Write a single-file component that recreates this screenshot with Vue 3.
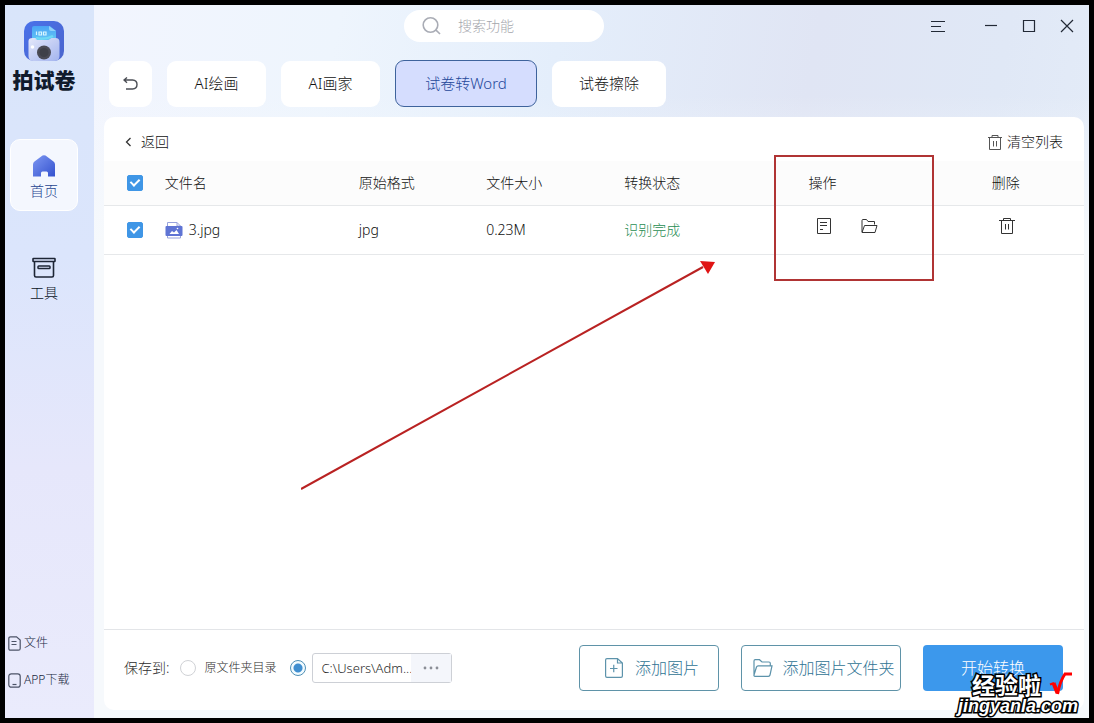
<script setup>
import { ref } from 'vue'

const tabs = ['AI绘画', 'AI画家', '试卷转Word', '试卷擦除']
const active = ref('试卷转Word')
const allChecked = ref(true)
const files = ref([{ name: '3.jpg', format: 'jpg', size: '0.23M', status: '识别完成', checked: true }])
const target = ref('custom')
const keyword = ref('')
const path = ref('C:\\Users\\Adm...')
</script>

<template>
  <div class="screen">
    <div class="window">
      <aside class="sidebar">
        <div class="brand">
          <svg class="logo" viewBox="0 0 40 40" aria-hidden="true">
            <defs>
              <linearGradient id="lg-bg" x1="0" y1="0" x2="1" y2="1">
                <stop offset="0" stop-color="#4a72ea" />
                <stop offset="1" stop-color="#4a64cc" />
              </linearGradient>
              <linearGradient id="lg-card" x1="0" y1="0" x2="0" y2="1">
                <stop offset="0" stop-color="#4aa3f5" />
                <stop offset="1" stop-color="#68cdf5" />
              </linearGradient>
              <linearGradient id="lg-body" x1="0" y1="0" x2="1" y2="1">
                <stop offset="0" stop-color="#e4e8fa" />
                <stop offset="1" stop-color="#a3b4ee" />
              </linearGradient>
            </defs>
            <rect width="40" height="40" rx="10" fill="url(#lg-bg)" />
            <path d="M10 5h16l6 5v12H8V7q0-2 2-2z" fill="url(#lg-card)" />
            <path d="M25 5l7 5h-5q-2 0-2-2z" fill="#8fd0fa" />
            <path d="M12.500 10.500v3.500M15 11h2.500v3H15zM19.500 11H22v3h-2.500z" stroke="#d9f6ff" stroke-width="1.200" fill="none" />
            <path d="M4.500 20q0-3 4-3h3l2 2h11l3-2h4q4 0 4 4v14q0 5-5 5H9.500q-5 0-5-5z" fill="url(#lg-body)" />
            <path d="M12 17q9 2 17-2" stroke="#6fd9f5" stroke-width="2.500" fill="none" />
            <circle cx="8.500" cy="26" r="1.800" fill="#fff" />
            <circle cx="20" cy="31.500" r="7" fill="#4b4b55" />
            <circle cx="20" cy="31.500" r="4.500" fill="#3f4048" />
          </svg>
          <strong class="brand-name">拍试卷</strong>
        </div>
        <nav class="menu">
          <a href="#home" class="menu-item current">
            <svg width="24" height="22" viewBox="0 0 24 22" aria-hidden="true">
              <defs>
                <linearGradient id="lg-home" x1="0" y1="0" x2="1" y2="1">
                  <stop offset="0" stop-color="#7d97f2" />
                  <stop offset="1" stop-color="#3452cf" />
                </linearGradient>
              </defs>
              <path d="M10.500.6q1.500-.9 3 0l8 6q1.500 1 1.500 3V21.500h-7V18q0-1.500-1.500-1.500h-4Q9 16.500 9 18v3.500H1V9.600q0-2 1.500-3z" fill="url(#lg-home)" />
            </svg>
            <span>首页</span>
          </a>
          <a href="#tools" class="menu-item">
            <svg width="24" height="22" viewBox="0 0 24 22" fill="none" stroke="#1d2535" stroke-width="1.600" aria-hidden="true">
              <rect x="1" y="1.500" width="22" height="3" rx=".5" />
              <path d="M2.500 5v13.500q0 1.500 1.500 1.500h16q1.500 0 1.500-1.500V5" />
              <rect x="6" y="9" width="12" height="2.600" rx=".8" stroke-width="1.500" />
            </svg>
            <span>工具</span>
          </a>
        </nav>
        <div class="extras">
          <a href="#files">
            <svg width="13" height="15" viewBox="0 0 13 15" fill="none" stroke="#4c5367" stroke-width="1.200" aria-hidden="true">
              <path d="M2.600.8H8.500L12.200 4v8.400q0 1.800-1.800 1.800H2.600Q.8 14.200.8 12.400V2.600Q.8.800 2.600.8zM3.500 5.500h5M3.500 8.500h5" />
            </svg>
            文件
          </a>
          <a href="#app">
            <svg width="13" height="15" viewBox="0 0 13 15" fill="none" stroke="#4c5367" stroke-width="1.200" aria-hidden="true">
              <rect x=".8" y=".8" width="11.400" height="13.400" rx="2.500" />
              <path d="M4.500 11.500h4" />
            </svg>
            APP下载
          </a>
        </div>
      </aside>

      <main class="main">
        <header class="titlebar">
          <label class="search">
            <svg width="20" height="20" viewBox="0 0 20 20" fill="none" stroke="#a9acb5" stroke-width="1.600" aria-hidden="true">
              <circle cx="8.500" cy="9" r="7.300" />
              <path d="M14 14.200L18 18" />
            </svg>
            <input v-model="keyword" type="text" placeholder="搜索功能" aria-label="搜索功能" />
          </label>
          <div class="controls">
            <button class="menu-button" aria-label="菜单">
              <svg width="14" height="14" viewBox="0 0 14 14"><path d="M0 2.500h14M0 7.500h10M0 12.500h14" /></svg>
            </button>
            <button aria-label="最小化">
              <svg width="14" height="14" viewBox="0 0 14 14"><path d="M1 6.500h12" /></svg>
            </button>
            <button aria-label="最大化">
              <svg width="14" height="14" viewBox="0 0 14 14"><path d="M1.500 1.500h11v11h-11z" /></svg>
            </button>
            <button aria-label="关闭">
              <svg width="14" height="14" viewBox="0 0 14 14"><path d="M1 1l12 12M13 1L1 13" /></svg>
            </button>
          </div>
        </header>

        <div class="tabs">
          <button class="tab undo" aria-label="后退">
            <svg width="15" height="13" viewBox="0 0 15 13" fill="none" stroke="#4b4e55" stroke-width="1.400" aria-hidden="true">
              <path d="M4 .5L1 3l3 2.700M1 3h8.500q4.500.3 4.500 4.500T9.500 12H3" />
            </svg>
          </button>
          <button v-for="t in tabs" :key="t" class="tab" :class="{ active: t === active }" @click="active = t">{{ t }}</button>
        </div>

        <section class="panel">
          <div class="toolbar">
            <button class="plain">
              <svg width="7" height="10" viewBox="0 0 7 10" fill="none" stroke="#333" stroke-width="1.300" aria-hidden="true"><path d="M5.500 1L1.500 5l4 4" /></svg>
              返回
            </button>
            <button class="plain clear">
              <svg width="16" height="17" viewBox="0 0 16 17" fill="none" stroke="#555" aria-hidden="true">
                <path d="M1 3.500h14M5 3.500v-2h6v2M2.500 3.500v12h11v-12M6.500 7v5.500M9.500 7v5.500" />
              </svg>
              清空列表
            </button>
          </div>

          <table class="files">
            <colgroup>
              <col class="c-check" /><col class="c-name" /><col class="c-format" /><col class="c-size" />
              <col class="c-status" /><col class="c-action" /><col class="c-delete" />
            </colgroup>
            <thead>
              <tr>
                <th><input v-model="allChecked" type="checkbox" aria-label="全选" /></th>
                <th>文件名</th>
                <th>原始格式</th>
                <th>文件大小</th>
                <th>转换状态</th>
                <th>操作</th>
                <th>删除</th>
              </tr>
            </thead>
            <tbody>
              <tr v-for="f in files" :key="f.name">
                <td><input v-model="f.checked" type="checkbox" :aria-label="f.name" /></td>
                <td>
                  <span class="file-name">
                    <svg width="18" height="18" viewBox="0 0 18 18" aria-hidden="true">
                      <path d="M2.500 5V1.500h9.500L15.500 5M2.500 14v3h13V14M12 1.500V5h3.500" fill="none" stroke="#98a3dc" />
                      <rect x=".5" y="5" width="17" height="10" rx="1" fill="#5f74d4" />
                      <path d="M4.500 13l2.500-3 2 1.500 2.500-2.500 2.500 4z" fill="#fff" />
                      <circle cx="12.500" cy="7.500" r=".8" fill="#fff" />
                    </svg>
                    {{ f.name }}
                  </span>
                </td>
                <td>{{ f.format }}</td>
                <td>{{ f.size }}</td>
                <td class="done">{{ f.status }}</td>
                <td>
                  <span class="actions">
                    <button class="plain" aria-label="打开文件">
                      <svg width="16" height="17" viewBox="0 0 16 17" fill="none" stroke="#333" aria-hidden="true">
                        <path d="M1.500.5h13v15h-13zM4 4.500h7M4 7.500h7M4 11.500h3" />
                      </svg>
                    </button>
                    <button class="plain" aria-label="打开文件夹">
                      <svg width="17" height="17" viewBox="0 0 17 17" fill="none" stroke="#333" aria-hidden="true">
                        <path d="M1 14V2.500Q1 1.500 2 1.500h3.500L7 3.500h6.500v3M1 14.500L3.500 7.500h12.500L14 14.500z" />
                      </svg>
                    </button>
                  </span>
                </td>
                <td>
                  <span class="actions">
                    <button class="plain" aria-label="删除">
                      <svg width="16" height="17" viewBox="0 0 16 17" fill="none" stroke="#333" aria-hidden="true">
                        <path d="M0 2.500h16M4.500 2.500v-2h7v2M2.500 2.500v13h11v-13M6.500 6v5.500M9.500 6v5.500" />
                      </svg>
                    </button>
                  </span>
                </td>
              </tr>
            </tbody>
          </table>

          <footer class="footer">
            <span class="save-label">保存到:</span>
            <label class="choice"><input v-model="target" type="radio" name="target" value="source" />原文件夹目录</label>
            <input v-model="target" type="radio" name="target" value="custom" aria-label="自定义目录" />
            <div class="path">
              <input v-model="path" type="text" aria-label="保存路径" />
              <button aria-label="选择目录">
                <svg width="16" height="4" viewBox="0 0 16 4" fill="#8b8e96" aria-hidden="true">
                  <circle cx="2" cy="2" r="1.400" /><circle cx="8" cy="2" r="1.400" /><circle cx="14" cy="2" r="1.400" />
                </svg>
              </button>
            </div>
            <div class="buttons">
              <button class="big add">
                <svg width="18" height="20" viewBox="0 0 18 20" fill="none" stroke="#5d93ab" stroke-width="1.200" aria-hidden="true">
                  <path d="M2 .6h10.500L17.400 5v13q0 1.400-1.400 1.400H2Q.6 19.400.6 18V2Q.6.6 2 .6zM12.500.6V5h4.900M5 10.500h7.500M8.750 6.700v7.500" />
                </svg>
                添加图片
              </button>
              <button class="big add folder">
                <svg width="20" height="18" viewBox="0 0 20 18" fill="none" stroke="#5d93ab" stroke-width="1.200" aria-hidden="true">
                  <path d="M1 16V2Q1 .7 2.300.7H6.500L9 3h7q1.300 0 1.300 1.300v2.500M2 17.300Q.7 17.300 1 16L3.500 8q.4-1.200 1.600-1.200H19l-2 9.200q-.3 1.300-1.600 1.300z" />
                </svg>
                添加图片文件夹
              </button>
              <button class="big start">开始转换</button>
            </div>
          </footer>
        </section>
      </main>
    </div>

    <svg class="arrow" width="414" height="230" viewBox="0 0 414 230" aria-hidden="true">
      <path d="M0 228L402 6" stroke="#b92222" stroke-width="2" />
      <path d="M414 1L399 0L407 13z" fill="#e01414" />
    </svg>
    <div class="highlight"></div>
    <div class="watermark">
      <div class="mark-title">
        经验啦
        <svg width="24" height="24" viewBox="0 0 24 24" fill="none" stroke="#f00" aria-hidden="true">
          <path d="M1 12.500L5 11" stroke-width="2" />
          <path d="M4.500 11L8.500 21" stroke-width="4" />
          <path d="M8.500 22Q11 9 16 2H23" stroke-width="3" />
        </svg>
      </div>
      <div class="mark-site">jingyanla.com</div>
    </div>
  </div>
</template>

<style>
body {
  margin: 0;
  background: #000;
}
</style>

<style scoped>
.screen {
  position: relative;
  box-sizing: border-box;
  min-height: 100vh;
  padding: 5px;
  display: flex;
  background: #000;
  overflow: hidden;
  font-family: "Noto Sans", "Noto Sans CJK SC", sans-serif;
  font-size: 14px;
  font-weight: 300;
  line-height: 20px;
  color: #111;
}
button,
input {
  font: inherit;
  color: inherit;
  margin: 0;
}
button {
  padding: 0;
  border: 0;
  background: none;
}
a {
  color: inherit;
  text-decoration: none;
}
svg {
  display: block;
  flex: none;
}
.window {
  flex: 1;
  display: flex;
  min-width: 0;
  background: #f6f9fc;
}
.sidebar {
  flex: none;
  width: 89px;
  display: flex;
  flex-direction: column;
  background: linear-gradient(180deg, #d9e5fa 0%, #dbe5fc 35%, #e6e7fb 65%, #eaebfc 100%);
}
.brand {
  padding-top: 16px;
  width: 78px;
  display: flex;
  flex-direction: column;
  align-items: center;
  gap: 4px;
}
.logo {
  width: 40px;
  height: 40px;
}
.brand-name {
  font-family: "Noto Sans CJK SC", sans-serif;
  font-size: 21px;
  line-height: 28px;
  font-weight: 900;
  color: #101a2c;
}
.menu {
  margin-top: 46px;
  padding-left: 5px;
  display: flex;
  flex-direction: column;
  gap: 30px;
}
.menu-item {
  box-sizing: border-box;
  width: 68px;
  height: 72px;
  padding-top: 6px;
  border-radius: 10px;
  display: flex;
  flex-direction: column;
  align-items: center;
  justify-content: center;
  gap: 4px;
  color: #0a1224;
}
.menu-item.current {
  background: #f4f7fe;
  border: 1px solid #fff;
  color: #1f4590;
}
.extras {
  margin-top: auto;
  padding: 0 0 28px 3px;
  display: flex;
  flex-direction: column;
  gap: 17px;
  font-size: 12px;
  color: #20283c;
}
.extras a {
  display: flex;
  align-items: center;
  gap: 3px;
}
.main {
  flex: 1;
  min-width: 0;
  padding: 0 5px 8px 10px;
  display: flex;
  flex-direction: column;
  background:
    linear-gradient(180deg, rgba(246, 249, 252, 0) 90px, #f6f9fc 240px),
    linear-gradient(100deg, #f2f5fe 0%, #eef5fd 22%, #e4eefb 42%, #e0e5f4 65%, #e0e8f6 82%, #e6eef9 100%);
}
.titlebar {
  padding: 5px 10px 0 300px;
  display: flex;
  align-items: center;
  justify-content: space-between;
}
.search {
  box-sizing: border-box;
  width: 200px;
  height: 32px;
  padding: 0 18px;
  border-radius: 16px;
  background: #fff;
  display: flex;
  align-items: center;
  gap: 16px;
}
.search input {
  flex: 1;
  min-width: 0;
  padding: 0;
  border: 0;
  outline: 0;
  background: none;
}
.search input::placeholder {
  color: #a4a6ac;
}
.controls {
  display: flex;
  gap: 24px;
}
.controls svg {
  fill: none;
  stroke: #222936;
  stroke-width: 1.2;
}
.menu-button {
  margin-right: 15px;
}
.tabs {
  padding: 18px 5px 10px;
  display: flex;
  align-items: center;
  gap: 15px;
}
.tab {
  height: 46px;
  min-width: 99px;
  padding: 0 27px 2px;
  border-radius: 9px;
  background: #fff;
  font-size: 15px;
}
.tab.undo {
  min-width: 43px;
  padding: 0 14px;
}
.tab.active {
  height: 47px;
  min-width: 142px;
  border: 1px solid #3e639c;
  background: #d5ddfe;
  color: #1f479a;
}
.panel {
  flex: 1;
  display: flex;
  flex-direction: column;
  border-radius: 10px;
  background: #fff;
}
.toolbar {
  height: 44px;
  padding: 6px 21px 0 21px;
  box-sizing: border-box;
  display: flex;
  align-items: center;
  justify-content: space-between;
}
.plain {
  display: flex;
  align-items: center;
  gap: 9px;
}
.clear {
  gap: 4px;
}
.files {
  width: 100%;
  table-layout: fixed;
  border-collapse: collapse;
}
.c-check { width: 6.2%; }
.c-name { width: 19.8%; }
.c-format { width: 13%; }
.c-size { width: 14.1%; }
.c-status { width: 18.8%; }
.c-action { width: 18.7%; }
.c-delete { width: 9.4%; }
.files th,
.files td {
  padding: 0;
  text-align: left;
  font-weight: inherit;
  border-bottom: 1px solid #e6e8ea;
}
.files th {
  height: 44px;
  background: #fcfcfc;
}
.files td {
  height: 48px;
}
.files th:first-child,
.files td:first-child {
  padding-left: 23px;
}
.files .done {
  color: #1f8d52;
}
.file-name {
  display: flex;
  align-items: center;
  gap: 6px;
}
.actions {
  display: flex;
  gap: 29px;
  padding: 0 0 8px 7px;
}
input[type="checkbox"] {
  appearance: none;
  display: block;
  width: 16px;
  height: 16px;
  border: 1px solid #c4c8d0;
  border-radius: 2px;
  position: relative;
}
input[type="checkbox"]:checked {
  border-color: #3f96e6;
  background: #3f96e6;
}
input[type="checkbox"]:checked::after {
  content: "";
  position: absolute;
  left: 4px;
  top: 1px;
  width: 4px;
  height: 7px;
  border: solid #fff;
  border-width: 0 2px 2px 0;
  transform: rotate(45deg);
}
input[type="radio"] {
  appearance: none;
  flex: none;
  width: 16px;
  height: 16px;
  border: 1px solid #d0d2d6;
  border-radius: 50%;
}
input[type="radio"]:checked {
  border-color: #4f8fb5;
  background: radial-gradient(circle, #3f8ed0 4px, #f1fbff 5px);
}
.footer {
  margin-top: auto;
  padding: 15px 21px 19px 20px;
  border-top: 1px solid #e3e5e8;
  display: flex;
  align-items: center;
  color: #2c2c2c;
}
.save-label {
  margin-right: 11px;
}
.choice {
  display: flex;
  align-items: center;
  gap: 8px;
  margin-right: 14px;
  font-size: 12px;
}
.path {
  box-sizing: border-box;
  width: 140px;
  height: 30px;
  margin-left: 6px;
  border: 1px solid #cdd0d6;
  border-radius: 3px;
  display: flex;
  font-size: 13px;
}
.path input {
  flex: 1;
  min-width: 0;
  padding: 0 0 0 8px;
  border: 0;
  outline: 0;
  background: none;
}
.path button {
  width: 40px;
  display: grid;
  place-items: center;
  background: #f4f6fb;
}
.buttons {
  margin-left: auto;
  display: flex;
  gap: 22px;
}
.big {
  box-sizing: border-box;
  width: 140px;
  height: 46px;
  border-radius: 4px;
  display: flex;
  align-items: center;
  justify-content: center;
  gap: 12px;
  font-size: 16px;
}
.add {
  padding-left: 6px;
  border: 1px solid #5f93a8;
  color: #2f7394;
}
.folder {
  width: 160px;
  gap: 9px;
  white-space: nowrap;
}
.start {
  background: #3c98ec;
  color: #fff;
}
.arrow {
  position: absolute;
  left: 301px;
  top: 261px;
}
.highlight {
  position: absolute;
  box-sizing: border-box;
  left: 774px;
  top: 155px;
  width: 160px;
  height: 126px;
  border: 2px solid #b03434;
}
.watermark {
  position: absolute;
  right: 16px;
  bottom: 7px;
  font-weight: 700;
  font-style: italic;
  color: #fff;
  paint-order: stroke fill;
  -webkit-text-stroke: 3px #000;
}
.mark-title {
  display: flex;
  justify-content: flex-end;
  align-items: center;
  padding-right: 5px;
  gap: 8px;
  font-family: "Noto Sans CJK SC", sans-serif;
  font-size: 23px;
  font-style: normal;
  line-height: 24px;
}
.mark-site {
  font-family: "Liberation Sans", Arial, sans-serif;
  font-size: 18px;
  line-height: 20px;
}
</style>
